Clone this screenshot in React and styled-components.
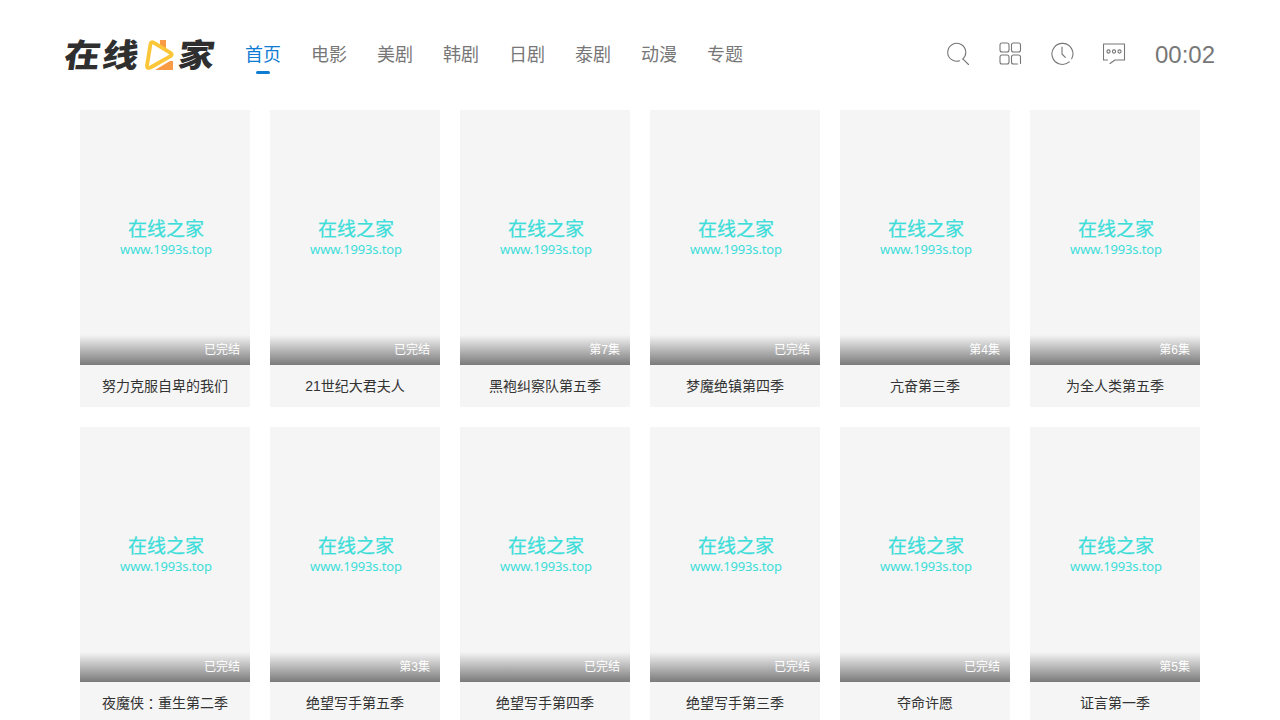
import React from 'react'
import styled, { createGlobalStyle } from 'styled-components';

const GlobalStyle = createGlobalStyle`
    * {
        box-sizing: border-box;
    }
    body {
        margin: 0;
        height: 720px;
        overflow: hidden;
        background: #fff;
        color: #333;
        font-family: "Liberation Sans", "Noto Sans CJK SC", sans-serif;
        font-size: 14px;
    }
`

/////////////
const Header = styled.header`
    display: flex;
    align-items: center;
    height: 110px;
    padding: 0 65px;
`

const LogoLink = styled.a`
    display: flex;
    align-items: center;
    width: 150px;
    height: 40px;
    margin-right: 30px;
    color: #2f2f2f;
    svg {
        flex-shrink: 0;
        margin: 0 3px 0 4px;
    }
`

const LogoText = styled.span`
    flex-shrink: 0;
    width: ${(props) => props.$width}px;
    font-family: "Noto Sans CJK SC", sans-serif;
    font-size: 36px;
    font-weight: 900;
    line-height: 40px;
    letter-spacing: 2px;
    white-space: nowrap;
    transform: translateY(-2px) skewX(-8deg) scaleY(0.9);
`

const Nav = styled.nav`
    display: flex;
    gap: 30px;
`

const NavItem = styled.a`
    position: relative;
    font-size: 18px;
    line-height: 40px;
    color: ${(props) => props.$current ? "#0e7cd3" : "#777"};
    &::after {
        content: "";
        display: ${(props) => props.$current ? "block" : "none"};
        position: absolute;
        left: 11px;
        bottom: 1px;
        width: 14px;
        height: 3px;
        border-radius: 2px;
        background: #0e7cd3;
    }
`

const Tools = styled.div`
    display: flex;
    align-items: center;
    gap: 29px;
    margin-left: auto;
    color: #777;
    svg {
        display: block;
        margin-bottom: 3px;
    }
`

const Clock = styled.span`
    font-size: 24px;
    line-height: 40px;
`

const Grid = styled.main`
    display: grid;
    grid-template-columns: repeat(6, 170px);
    gap: 20px;
    padding: 0 80px;
`

const Card = styled.article`
    height: 297px;
    background: #f5f5f5;
`

const Poster = styled.div`
    position: relative;
    display: flex;
    flex-direction: column;
    align-items: center;
    height: 255px;
    padding: 105px 0 0 2px;
    color: #3dddd9;
`

const MarkName = styled.div`
    font-family: "Noto Sans CJK SC", sans-serif;
    font-size: 19px;
    line-height: 25px;
    -webkit-text-stroke: 0.25px #3dddd9;
`

const MarkUrl = styled.div`
    font-family: "Noto Sans", sans-serif;
    font-size: 13px;
    line-height: 18px;
    letter-spacing: -0.14px;
`

const Note = styled.div`
    position: absolute;
    left: 0;
    right: 0;
    bottom: 0;
    height: 30px;
    padding: 0 10px;
    font-size: 12px;
    line-height: 30px;
    text-align: right;
    color: #fff;
    background: linear-gradient(to bottom, rgba(0, 0, 0, 0), rgba(0, 0, 0, 0.5));
`

const Title = styled.h3`
    margin: 0;
    padding: 0 10px;
    font-size: 14px;
    font-weight: 400;
    line-height: 42px;
    text-align: center;
    white-space: nowrap;
    color: #333;
`

/* the TC face centers the full width colon */
const Colon = styled.span`
    position: relative;
    top: 1px;
    font-family: "Noto Sans CJK TC", sans-serif;
    line-height: 1;
`

const navItems = ["首页", "电影", "美剧", "韩剧", "日剧", "泰剧", "动漫", "专题"];

const shows = [
    { title: "努力克服自卑的我们", note: "已完结" },
    { title: "21世纪大君夫人", note: "已完结" },
    { title: "黑袍纠察队第五季", note: "第7集" },
    { title: "梦魔绝镇第四季", note: "已完结" },
    { title: "亢奋第三季", note: "第4集" },
    { title: "为全人类第五季", note: "第6集" },
    { title: "夜魔侠：重生第二季", note: "已完结" },
    { title: "绝望写手第五季", note: "第3集" },
    { title: "绝望写手第四季", note: "已完结" },
    { title: "绝望写手第三季", note: "已完结" },
    { title: "夺命许愿", note: "已完结" },
    { title: "证言第一季", note: "第5集" },
];

const Icon = ({ children }) => (
    <svg width="23" height="23" viewBox="1 0.5 23 23" fill="none" stroke="currentColor" strokeWidth="1.1" strokeLinecap="round" strokeLinejoin="round">
        {children}
    </svg>
)

const Logo = () => (
    <LogoLink>
        <LogoText $width={75}>在线</LogoText>
        <svg width="32" height="34" viewBox="0 0 32 34" fill="none">
            <path d="M16 2h6v9l-6-3zM11 32l15-9h3v9z" fill="#f99a45" />
            <path d="M6.500 6Q7.200 3.200 10 4.800L26.500 14.800Q29 16.500 26.500 18.200L6.500 29.500Q2.600 31 3 27.500Z" fill="#fff" stroke="#fbc638" strokeWidth="3.800" strokeLinejoin="round" />
        </svg>
        <LogoText $width={36}>家</LogoText>
    </LogoLink>
)

const App = () => {
  return (
    <>
        <GlobalStyle />
        <Header>
            <Logo />
            <Nav>
                {navItems.map((item, i) => (
                    <NavItem key={item} $current={i === 0}>{item}</NavItem>
                ))}
            </Nav>
            <Tools>
                {/* search */}
                <Icon>
                    <path d="M13.600 19.300A9 9 0 1 1 16.600 17.600M16.800 17.300L22.500 23" />
                </Icon>
                {/* categories */}
                <Icon>
                    <rect x="2" y="1.500" width="9" height="9" rx="2" />
                    <rect x="13.500" y="1.500" width="9" height="9" rx="2" />
                    <rect x="2" y="13.500" width="9" height="9" rx="2" />
                    <path d="M19.500 22.500h-4a2 2 0 0 1-2-2v-5a2 2 0 0 1 2-2h5a2 2 0 0 1 2 2v6.500" />
                </Icon>
                {/* history */}
                <Icon>
                    <path d="M19.200 20.400A10.500 10.500 0 1 1 21.700 17.300M12 5.500v7l3.300 3.300" />
                </Icon>
                {/* message */}
                <Icon>
                    <path d="M5.500 18.500h-4v-16h21v16h-9.500l-5 3.500" />
                    <circle cx="6.500" cy="10" r="1.600" />
                    <circle cx="12" cy="10" r="1.600" />
                    <circle cx="17.500" cy="10" r="1.600" />
                </Icon>
                <Clock>00:02</Clock>
            </Tools>
        </Header>
        <Grid>
            {shows.map((show) => (
                <Card key={show.title}>
                    <Poster>
                        <MarkName>在线之家</MarkName>
                        <MarkUrl>www.1993s.top</MarkUrl>
                        <Note>{show.note}</Note>
                    </Poster>
                    <Title>
                        {show.title.split("：").map((part, i) => (
                            <React.Fragment key={part}>
                                {i > 0 && <Colon lang="zh-TW">：</Colon>}
                                {part}
                            </React.Fragment>
                        ))}
                    </Title>
                </Card>
            ))}
        </Grid>
    </>
  )
}

export default App;
